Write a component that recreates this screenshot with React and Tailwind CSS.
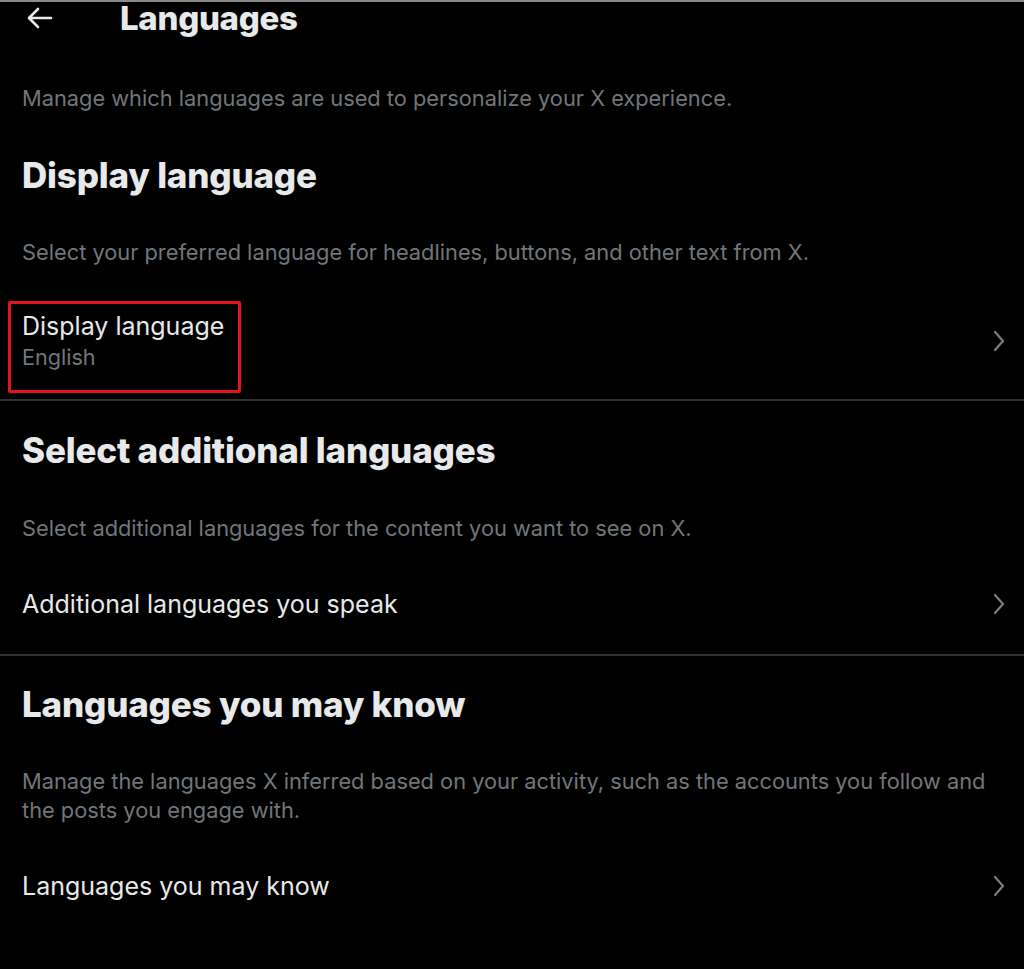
import React from "react";

const FONT = { fontFamily: "Inter, 'Noto Sans', 'Liberation Sans', sans-serif" };

const Chevron = () => (
  <svg width="12" height="22" viewBox="0 0 12 22" fill="none" className="shrink-0">
    <path d="M2 2l8 9-8 9" stroke="#7a7e82" strokeWidth="2.2" strokeLinecap="round" strokeLinejoin="round" />
  </svg>
);

const Heading = ({ children, className = "" }) => (
  <h2 className={`px-[22px] text-[35px] font-extrabold leading-[34px] tracking-[-0.2px] text-[#e7e9ea] ${className}`}>
    {children}
  </h2>
);

const Desc = ({ children, className = "" }) => (
  <p className={`px-[22px] text-[21.8px] leading-[29px] text-[#71767b] ${className}`}>{children}</p>
);

const Item = ({ children }) => <div className="text-[25px] leading-[32px] text-[#e7e9ea]">{children}</div>;

export default function App() {
  return (
    <div className="min-h-[969px] w-full border-t-[2px] border-[#8a8a8a] bg-black" style={FONT}>
      {/* header */}
      <div className="flex h-[32px] items-center">
        <div className="flex w-[120px] items-center pl-[26px]">
          <svg width="28" height="24" viewBox="0 0 28 24" fill="none">
            <path d="M25 12H4M12 3l-9 9 9 9" stroke="#e7e9ea" strokeWidth="2.6" strokeLinecap="round" strokeLinejoin="round" />
          </svg>
        </div>
        <h1 className="text-[33px] font-extrabold leading-[32px] tracking-[-0.3px] text-[#e7e9ea]">Languages</h1>
      </div>

      <Desc className="mt-[50px]">Manage which languages are used to personalize your X experience.</Desc>

      <Heading className="mt-[45px]">Display language</Heading>
      <Desc className="mt-[46px]">Select your preferred language for headlines, buttons, and other text from X.</Desc>

      <div className="relative mt-[43px] flex items-center justify-between pb-[27px] pl-[22px] pr-[19px]">
        <div>
          <Item>Display language</Item>
          <div className="text-[21.6px] leading-[30px] text-[#71767b]">English</div>
        </div>
        <Chevron />
        <div className="pointer-events-none absolute left-[8px] top-[-9px] h-[92px] w-[233px] rounded-[2px] border-[3px] border-[#e3141c]" />
      </div>
      <div className="h-[2px] bg-[#2f3336]" />

      <Heading className="mt-[32px]">Select additional languages</Heading>
      <Desc className="mt-[47px]">Select additional languages for the content you want to see on X.</Desc>

      <div className="mt-[45px] flex items-center justify-between pl-[22px] pr-[19px]">
        <Item>Additional languages you speak</Item>
        <Chevron />
      </div>
      <div className="mt-[34px] h-[2px] bg-[#2f3336]" />

      <Heading className="mt-[31px]">Languages you may know</Heading>
      <Desc className="mt-[46px]">
        Manage the languages X inferred based on your activity, such as the accounts you follow and the posts you engage with.
      </Desc>

      <div className="mt-[45px] flex items-center justify-between pl-[22px] pr-[19px]">
        <Item>Languages you may know</Item>
        <Chevron />
      </div>
    </div>
  );
}
